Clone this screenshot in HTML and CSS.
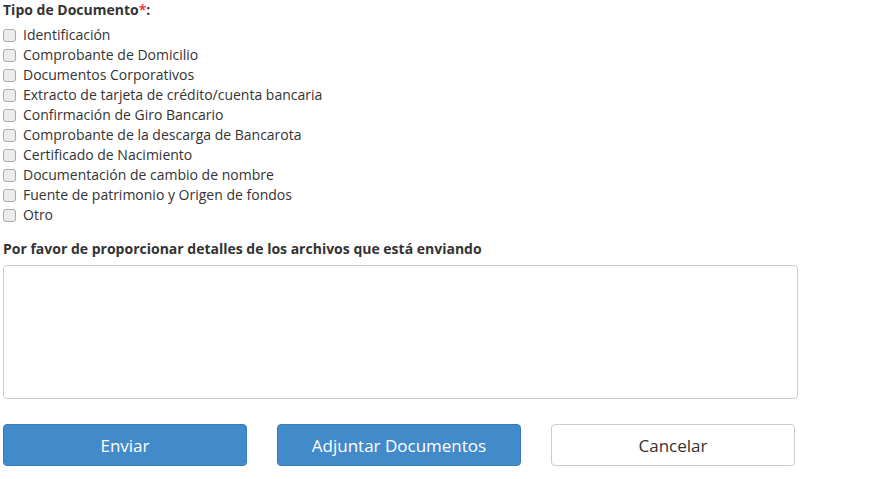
FILE: index.html
```html
<!DOCTYPE html>
<html lang="es">
<head>
    <meta charset="UTF-8">
    <title>Tipo de Documento</title>
    <link rel="stylesheet" href="styles.css">
</head>
<body>
<form class="doc-form">
    <div class="field-label">Tipo de Documento<span class="req">*</span>:</div>
    <div class="check-list">
        <label class="check-row"><input type="checkbox"> Identificación</label>
        <label class="check-row"><input type="checkbox"> Comprobante de Domicilio</label>
        <label class="check-row"><input type="checkbox"> Documentos Corporativos</label>
        <label class="check-row"><input type="checkbox"> Extracto de tarjeta de crédito/cuenta bancaria</label>
        <label class="check-row"><input type="checkbox"> Confirmación de Giro Bancario</label>
        <label class="check-row"><input type="checkbox"> Comprobante de la descarga de Bancarota</label>
        <label class="check-row"><input type="checkbox"> Certificado de Nacimiento</label>
        <label class="check-row"><input type="checkbox"> Documentación de cambio de nombre</label>
        <label class="check-row"><input type="checkbox"> Fuente de patrimonio y Origen de fondos</label>
        <label class="check-row"><input type="checkbox"> Otro</label>
    </div>
    <label class="field-label details-label" for="details">Por favor de proporcionar detalles de los archivos que está enviando</label>
    <textarea id="details" class="details"></textarea>
    <div class="actions">
        <button type="button" class="btn btn-primary">Enviar</button>
        <button type="button" class="btn btn-primary">Adjuntar Documentos</button>
        <button type="button" class="btn btn-default">Cancelar</button>
    </div>
</form>
</body>
</html>
```

FILE: styles.css
```css
body {
    margin: 0;
    padding: 0;
    background: #fff;
    font-family: "Open Sans", "Noto Sans", sans-serif;
    font-size: 14px;
    color: #333;
}

.doc-form {
    width: 794px;
    padding: 0 3px;
}

.field-label {
    display: block;
    font-weight: bold;
    line-height: 20px;
}

.req {
    color: #e8414a;
}

.check-list {
    margin-top: 5px;
    display: flex;
    flex-direction: column;
}

.check-row {
    display: flex;
    align-items: center;
    height: 20px;
    line-height: 20px;
}

.check-row input {
    appearance: none;
    -webkit-appearance: none;
    width: 13px;
    height: 13px;
    margin: 0 7px 0 0;
    border: 1px solid #a9a9a9;
    border-radius: 3px;
    background: #ececec;
}

.details-label {
    margin-top: 14px;
}

.details {
    display: block;
    box-sizing: border-box;
    width: 795px;
    height: 134px;
    margin-top: 6px;
    border: 1px solid #ccc;
    border-radius: 4px;
    resize: none;
    font-family: inherit;
}

.actions {
    display: flex;
    gap: 30px;
    margin-top: 25px;
}

.btn {
    width: 244px;
    height: 42px;
    border-radius: 4px;
    font-family: inherit;
    font-size: 17px;
}

.btn-primary {
    background: #428bca;
    border: 1px solid #357ebd;
    color: #fff;
}

.btn-default {
    background: #fff;
    border: 1px solid #ccc;
    color: #333;
}
```
